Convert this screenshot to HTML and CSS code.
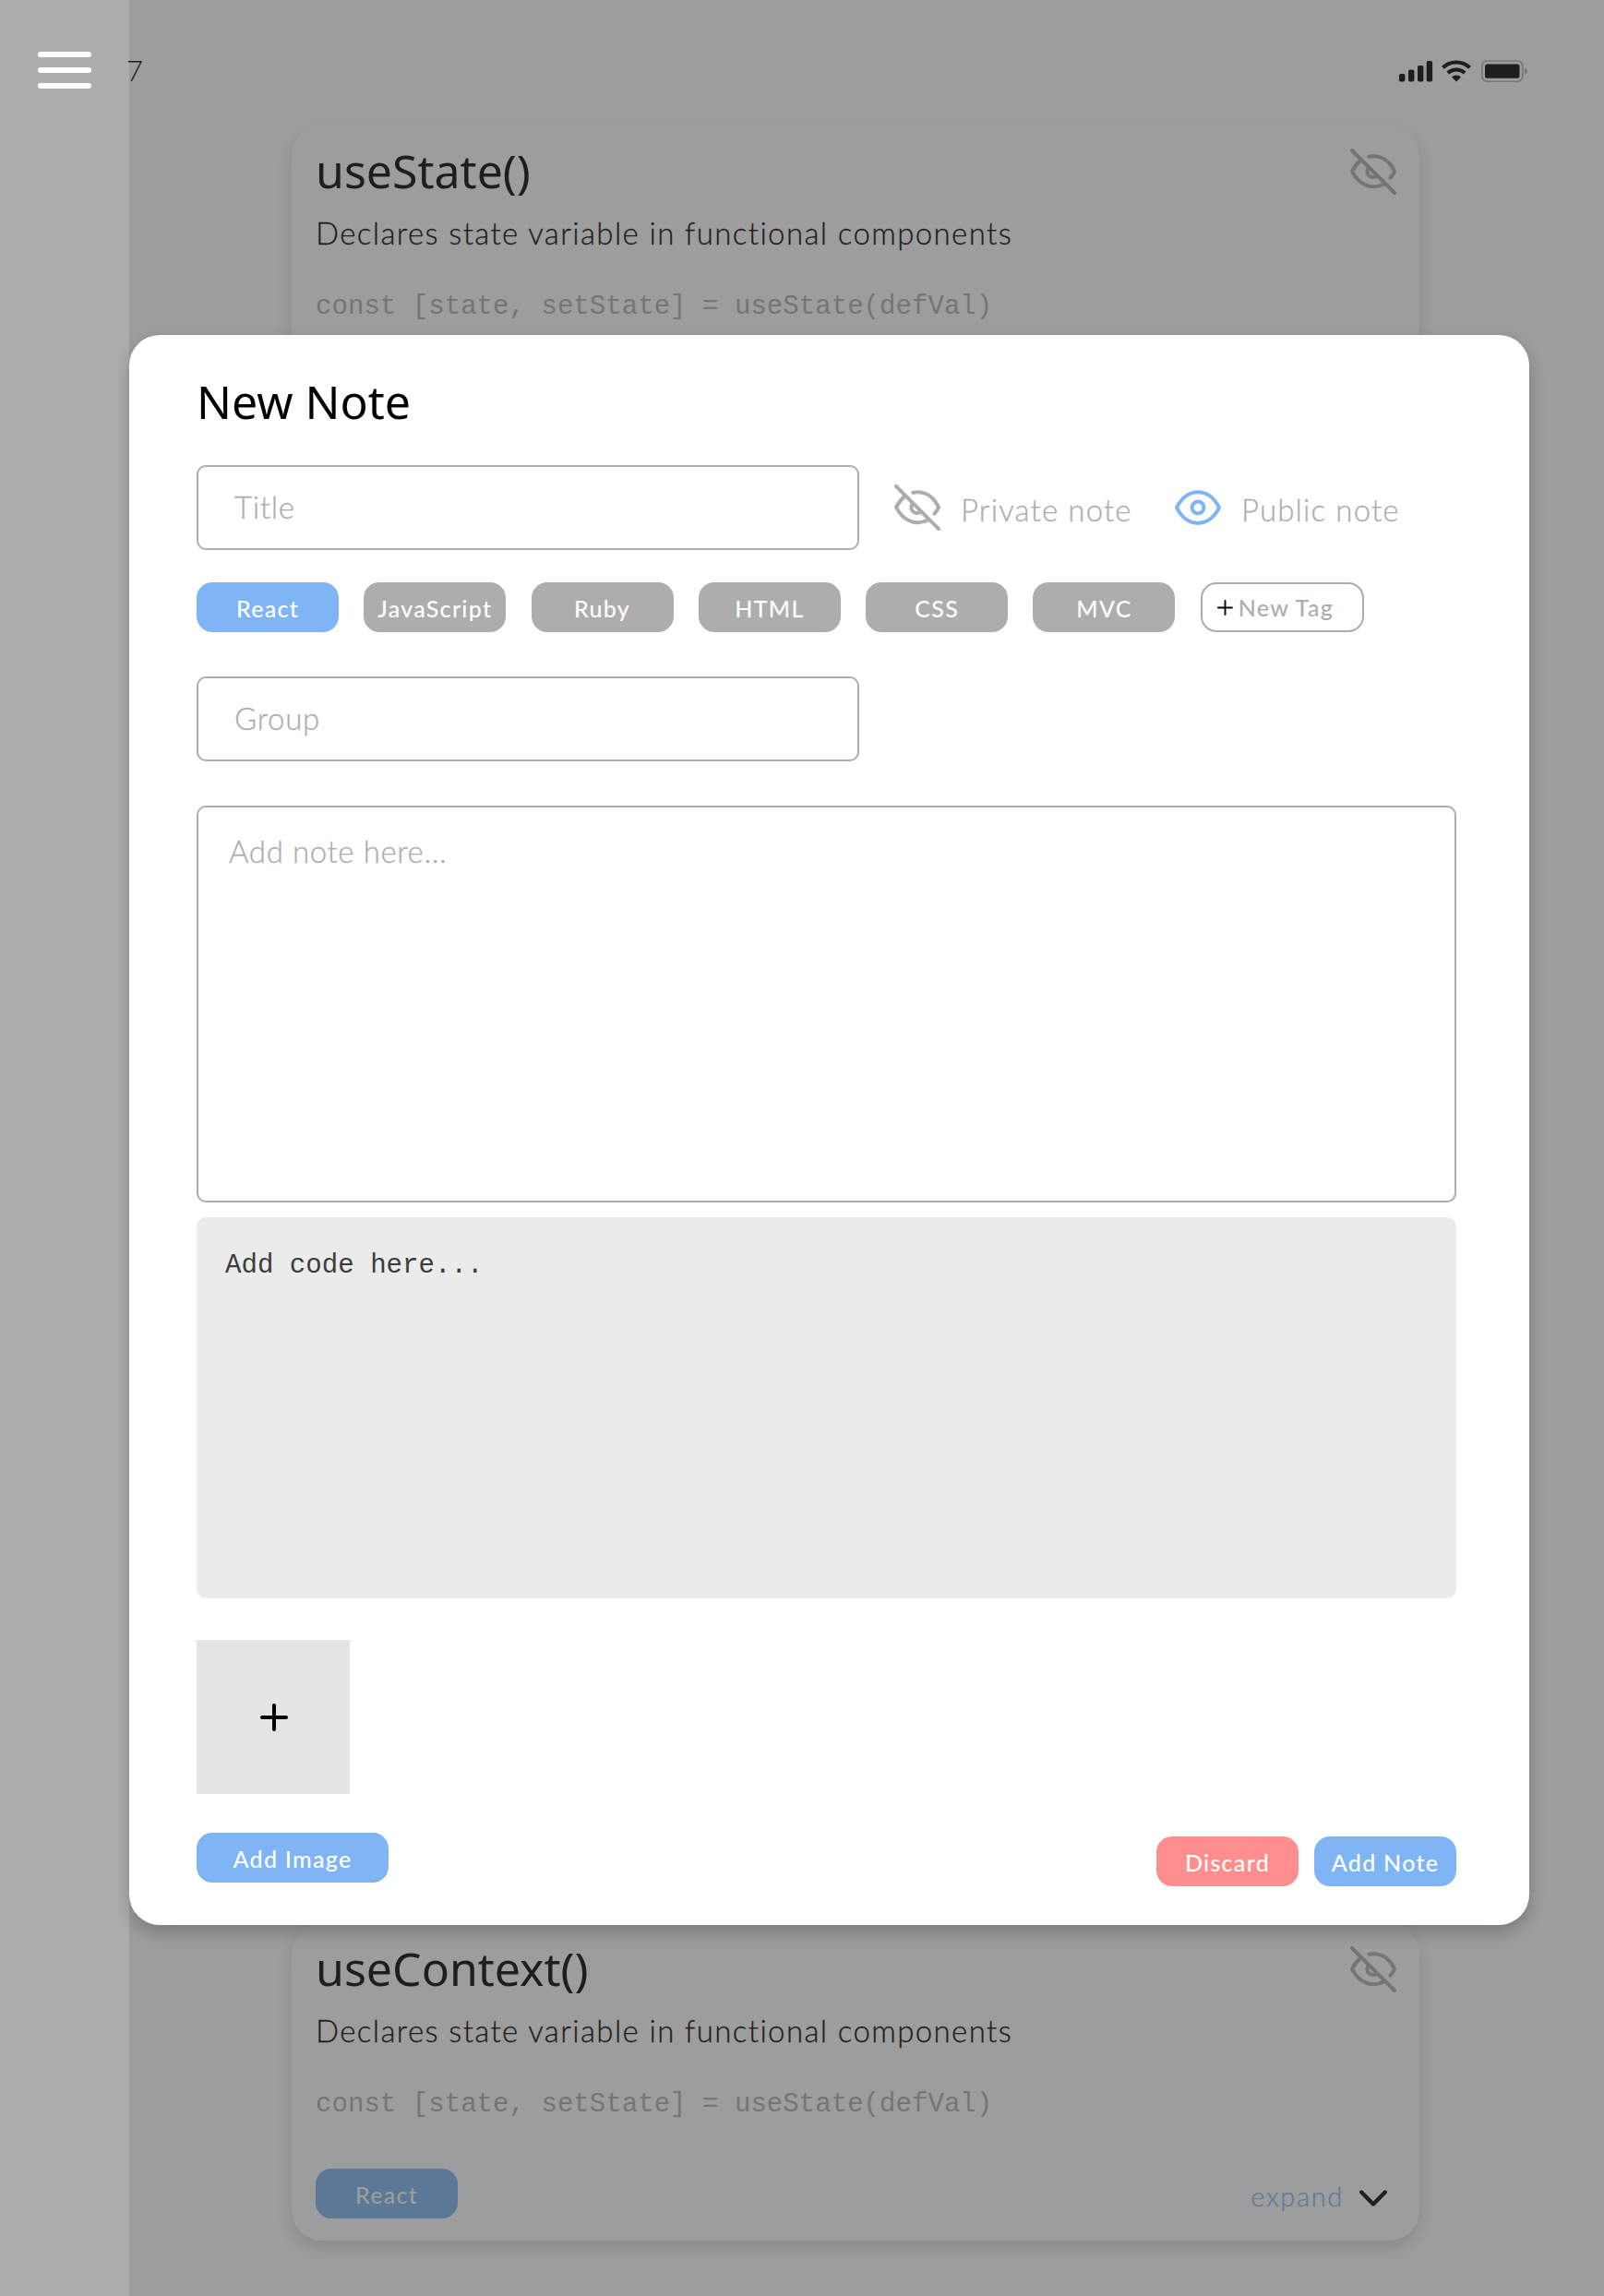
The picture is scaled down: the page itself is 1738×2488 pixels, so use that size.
FILE: index.html
```
<!DOCTYPE html>
<html lang="en">
<head>
<meta charset="utf-8">
<title>New Note</title>
<link rel="stylesheet" href="styles.css">
</head>
<body>
<svg class="defs" width="0" height="0" aria-hidden="true">
  <symbol id="eye-off" viewBox="0 0 50 50">
    <g fill="none" stroke="currentColor" stroke-width="4" stroke-linecap="round" stroke-linejoin="round">
      <path d="M2 2L48 48"/>
      <path d="M20.300 8.700C33 6.300 42.500 13 48 24.700Q46.500 28.500 43.500 31.700"/>
      <path d="M11.500 12.600Q5.500 17.500 2 24.700C10 40.500 24.500 45 37 38.300"/>
      <path d="M20.300 20.300A6.200 6.200 0 0 0 29 29.300"/>
    </g>
  </symbol>
  <symbol id="eye" viewBox="0 0 50 50">
    <g fill="none" stroke="currentColor" stroke-width="4" stroke-linejoin="round">
      <path d="M2 25C13 2.500 37 2.500 48 25C37 47.500 13 47.500 2 25Z"/>
      <circle cx="25" cy="25" r="6.400"/>
    </g>
  </symbol>
  <symbol id="plus" viewBox="0 0 30 30">
    <path d="M15 2V28M2 15H28" fill="none" stroke="currentColor" stroke-width="4" stroke-linecap="round"/>
  </symbol>
</svg>

<div class="app">
  <aside class="sidebar">
    <button class="menu" aria-label="Menu"><span></span><span></span><span></span></button>
  </aside>
  <main class="main">
    <header class="status">
      <span class="time">7</span>
      <svg class="status-icons" viewBox="0 0 140 24" width="140" height="24">
        <g fill="#1e1e1e">
          <rect x="0" y="15" width="6.400" height="8.500" rx="1.800"/>
          <rect x="10" y="10.500" width="6.400" height="13" rx="1.800"/>
          <rect x="20" y="6" width="6.400" height="17.500" rx="1.800"/>
          <rect x="29.700" y="1" width="6.400" height="22.500" rx="1.800"/>
          <path d="M57 18.500A7.500 7.500 0 0 1 67 18.500L62 23.500Z"/>
          <rect x="93" y="4.500" width="37.500" height="15.300" rx="2.500"/>
        </g>
        <path d="M47.500 8.300A21 21 0 0 1 76.500 8.300M52.800 14A13.500 13.500 0 0 1 71.200 14" fill="none" stroke="#1e1e1e" stroke-width="4"/>
        <rect x="89.800" y="1" width="44" height="22.300" rx="5.500" fill="none" stroke="#777" stroke-width="1.700"/>
        <path d="M136 8.500Q139 9.500 139 12T136 16Z" fill="#777"/>
      </svg>
    </header>

    <article class="card">
      <div class="card-head"><h2>useState()</h2><svg class="icon"><use href="#eye-off"/></svg></div>
      <p>Declares state variable in functional components</p>
      <code>const [state, setState] = useState(defVal)</code>
    </article>

    <article class="card">
      <div class="card-head"><h2>useContext()</h2><svg class="icon"><use href="#eye-off"/></svg></div>
      <p>Declares state variable in functional components</p>
      <code>const [state, setState] = useState(defVal)</code>
      <div class="card-foot">
        <span class="tag tag-dim">React</span>
        <span class="expand">expand
          <svg width="30" height="19" viewBox="0 0 30 19"><path d="M2.200 2.500L15 15.500L27.800 2.500" fill="none" stroke="#1e1e1e" stroke-width="4.200" stroke-linecap="round" stroke-linejoin="round"/></svg>
        </span>
      </div>
    </article>
  </main>

  <section class="modal">
    <h1>New Note</h1>
    <div class="title-row">
      <div class="field">Title</div>
      <span class="visibility private"><svg class="icon"><use href="#eye-off"/></svg><span>Private note</span></span>
      <span class="visibility public"><svg class="icon"><use href="#eye"/></svg><span>Public note</span></span>
    </div>
    <div class="tags">
      <span class="tag tag-active">React</span>
      <span class="tag">JavaScript</span>
      <span class="tag">Ruby</span>
      <span class="tag">HTML</span>
      <span class="tag">CSS</span>
      <span class="tag">MVC</span>
      <span class="tag tag-new"><svg width="17" height="17" viewBox="0 0 17 17"><path d="M8.500 1V16M1 8.500H16" fill="none" stroke="#000" stroke-width="1.900" stroke-linecap="round"/></svg>New Tag</span>
    </div>
    <div class="field group">Group</div>
    <div class="note">Add note here...</div>
    <div class="code">Add code here...</div>
    <div class="image-slot"><svg width="30" height="30"><use href="#plus"/></svg></div>
    <div class="actions">
      <button class="tag tag-active add-image">Add Image</button>
      <div class="confirm">
        <button class="tag tag-danger">Discard</button>
        <button class="tag tag-active">Add Note</button>
      </div>
    </div>
  </section>
</div>
</body>
</html>
```
FILE: styles.css
```
* { box-sizing: border-box; }
body { margin: 0; background: #9d9d9d; font-family: Lato, "Open Sans", sans-serif; }
h1, h2, p { margin: 0; font-weight: 400; }
button { border: 0; padding: 0; font: inherit; }
svg { display: block; }
.defs { position: absolute; }

.app { position: relative; display: grid; grid-template-columns: 140px 1fr; height: 2488px; overflow: hidden; }
.sidebar { background: #adadad; padding: 56px 0 0 41px; }
.menu { display: flex; flex-direction: column; gap: 11px; width: 58px; background: none; }
.menu span { height: 6px; border-radius: 3px; background: #fff; }

.main { display: flex; flex-direction: column; }
.status { display: flex; justify-content: space-between; height: 136px; padding: 65px 82px 0 0; }
.time { font-size: 31px; line-height: 22px; font-weight: 300; color: #1e1e1e; margin-left: -3px; }

.card { width: 1222px; height: 344px; margin: 0 0 1604px 176px; padding: 15px 25px 0 26px; border-radius: 33px; background: #9d9d9d; box-shadow: 0 8px 18px rgba(0, 0, 0, .12); color: #1e1e1e; flex: none; }
.card:last-child { margin-bottom: 0; }
.card-head { display: flex; justify-content: space-between; height: 75px; }
.card h2, h1 { font: 400 50px/68px "Noto Sans", sans-serif; }
.card-head .icon { margin-top: 10px; color: #757575; }
.card p { font-size: 33px; line-height: 40px; font-weight: 300; letter-spacing: 1.380px; margin-top: 6px; -webkit-text-stroke: .3px; }
.card p, .card code { white-space: nowrap; }
.card code, .code { font: 29.100px/34px "Liberation Mono", monospace; }
.card code { display: block; margin-top: 44px; color: #757575; }
.card-foot { display: flex; justify-content: space-between; margin-top: 52px; }
.expand { display: flex; gap: 17px; align-items: center; height: 58px; font-size: 29px; font-weight: 300; letter-spacing: 1.700px; color: #5f7b9b; padding: 0 10px 0 0; -webkit-text-stroke: .3px; }
.expand svg { margin-top: 6px; }
.icon { width: 50px; height: 50px; flex: none; }

.modal { position: absolute; left: 140px; top: 363px; width: 1517px; height: 1723px; padding: 38px 79px 0 73px; border-radius: 33px; background: #fff; box-shadow: 0 8px 18px rgba(0, 0, 0, .22); }
.title-row { display: flex; align-items: center; margin-top: 35px; }
.field { width: 718px; height: 92px; padding-left: 39px; border: 2px solid #adadad; border-radius: 10px; font-size: 33px; line-height: 87px; font-weight: 300; letter-spacing: .7px; color: #adadad; -webkit-text-stroke: .3px; }
.visibility { display: flex; align-items: center; font-size: 33px; font-weight: 300; letter-spacing: 1.150px; color: #adadad; gap: 22px; -webkit-text-stroke: .3px; }
.visibility span { padding-top: 4px; }
.private { margin-left: 38px; width: 304px; }
.public .icon { color: #7fb5f5; }
.tags { display: flex; gap: 27.300px; margin-top: 35px; }
.tag { display: flex; align-items: center; justify-content: center; width: 154px; height: 54px; padding-top: 2px; border-radius: 17px; background: #adadad; color: #fff; font-size: 25px; font-weight: 500; letter-spacing: 1.300px; }
.tag-active { background: #7fb5f5; }
.tag-danger { background: #ff8e8e; }
.tag-dim { background: #5b7897; color: #9d9d9d; }
.tag-new { width: 177px; border: 2px solid #adadad; background: #fff; color: #adadad; justify-content: flex-start; padding: 0 0 0 16px; gap: 6px; white-space: nowrap; }
.group { margin-top: 48px; }
.note { height: 430px; margin-top: 48px; padding: 27px 33px; border: 2px solid #adadad; border-radius: 10px; font-size: 33px; line-height: 40px; font-weight: 300; letter-spacing: .6px; color: #adadad; -webkit-text-stroke: .3px; }
.code { height: 413px; margin-top: 16px; padding: 36px 31px; border-radius: 10px; background: #ebebeb; color: #3c3c3c; }
.image-slot { display: grid; place-items: center; width: 166px; height: 167px; padding: 1px 0 0 1px; margin-top: 45px; background: #e5e5e5; }
.actions { display: flex; justify-content: space-between; margin-top: 42px; }
.add-image { width: 208px; }
.confirm { display: flex; gap: 17px; margin-top: 4px; }
```
